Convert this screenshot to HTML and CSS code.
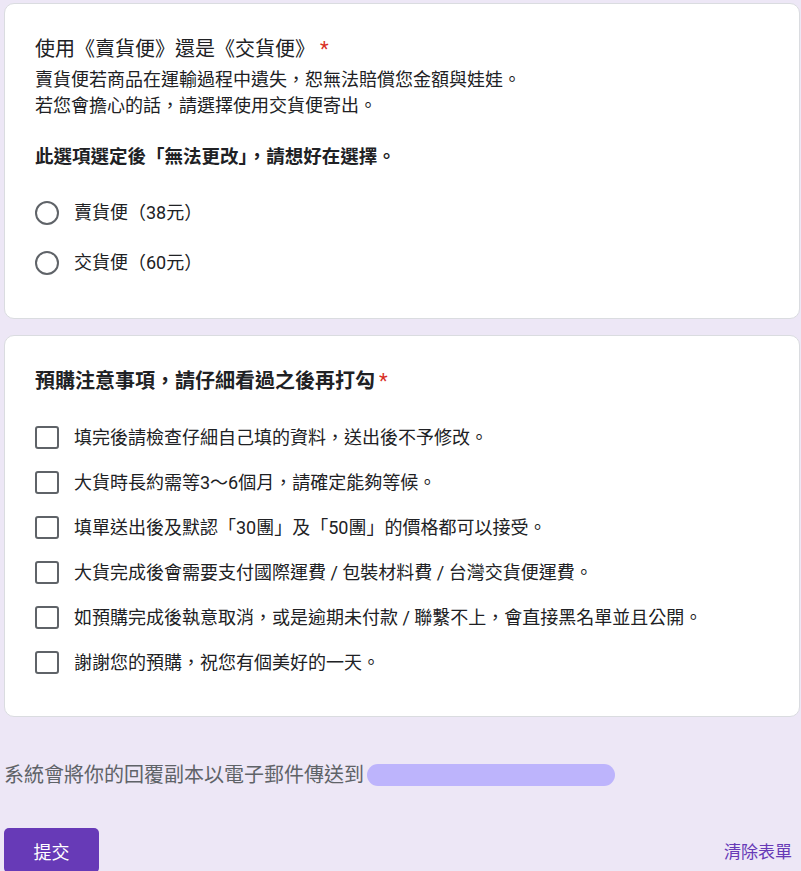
FILE: index.html
```html
<!DOCTYPE html>
<html lang="zh-Hant">
<head>
<meta charset="utf-8">
<title>預購表單</title>
<link rel="stylesheet" href="styles.css">
</head>
<body>
<main class="form">
  <section class="card card-radio">
    <div class="q-title">使用《賣貨便》還是《交貨便》<span class="req">*</span></div>
    <div class="q-desc">
      <div>賣貨便若商品在運輸過程中遺失，恕無法賠償您金額與娃娃。</div>
      <div>若您會擔心的話，請選擇使用交貨便寄出。</div>
      <div class="blank">&nbsp;</div>
      <div class="strong">此選項選定後「無法更改」，請想好在選擇。</div>
    </div>
    <div class="options radio-list">
      <label class="opt"><span class="radio"></span><span>賣貨便（38元）</span></label>
      <label class="opt"><span class="radio"></span><span>交貨便（60元）</span></label>
    </div>
  </section>

  <section class="card card-check">
    <div class="q-title strong">預購注意事項，請仔細看過之後再打勾<span class="req req-tight">*</span></div>
    <div class="options check-list">
      <label class="opt"><span class="box"></span><span>填完後請檢查仔細自己填的資料，送出後不予修改。</span></label>
      <label class="opt"><span class="box"></span><span>大貨時長約需等3～6個月，請確定能夠等候。</span></label>
      <label class="opt"><span class="box"></span><span>填單送出後及默認「30團」及「50團」的價格都可以接受。</span></label>
      <label class="opt"><span class="box"></span><span>大貨完成後會需要支付國際運費 / 包裝材料費 / 台灣交貨便運費。</span></label>
      <label class="opt"><span class="box"></span><span>如預購完成後執意取消，或是逾期未付款 / 聯繫不上，會直接黑名單並且公開。</span></label>
      <label class="opt"><span class="box"></span><span>謝謝您的預購，祝您有個美好的一天。</span></label>
    </div>
  </section>

  <div class="email-note">系統會將你的回覆副本以電子郵件傳送到<span class="masked"></span></div>

  <div class="actions">
    <button class="submit" type="button">提交</button>
    <button class="clear" type="button">清除表單</button>
  </div>
</main>
</body>
</html>
```

FILE: styles.css
```css
* { box-sizing: border-box; }

html, body {
  margin: 0;
  padding: 0;
  background: #ede7f6;
}

body {
  font-family: Roboto, "Noto Sans CJK TC", "Noto Sans", sans-serif;
  color: #202124;
  overflow: hidden;
}

.form {
  display: flex;
  flex-direction: column;
  padding: 3px 1px 0 4px;
}

.card {
  background: #fff;
  border: 1px solid #dadce0;
  border-radius: 10px;
  padding: 31px 30px 30px 30px;
}

.card-check {
  margin-top: 16px;
  padding-bottom: 31px;
}

.q-title {
  font-size: 20px;
  line-height: 28px;
  font-weight: 400;
}

.q-title.strong { font-weight: 700; }

.req {
  color: #d93025;
  margin-left: 5px;
}

.req-tight { margin-left: 4px; font-weight: 400; }

.q-desc {
  margin-top: 4px;
  font-size: 18px;
  line-height: 26px;
}

.q-desc .strong {
  font-weight: 700;
  font-size: 18.5px;
  margin-top: -1px;
}

.options {
  display: flex;
  flex-direction: column;
}

.radio-list { margin-top: 18px; }

.check-list { margin-top: 20px; }

.opt {
  display: flex;
  align-items: center;
  gap: 15px;
  font-size: 18px;
  line-height: 26px;
}

.radio-list .opt { height: 50px; }

.check-list .opt { height: 45px; }

.radio {
  width: 24px;
  height: 24px;
  border: 2px solid #5f6368;
  border-radius: 50%;
  flex: none;
}

.box {
  width: 24px;
  height: 23px;
  border: 2px solid #5f6368;
  border-radius: 3px;
  flex: none;
}

.email-note {
  margin-top: 44px;
  display: flex;
  align-items: center;
  font-size: 20px;
  line-height: 28px;
  color: #5f6368;
}

.masked {
  display: inline-block;
  width: 248px;
  height: 22px;
  margin-left: 3px;
  border-radius: 11px;
  background: #bdb4fc;
}

.actions {
  margin-top: 39px;
  display: flex;
  justify-content: space-between;
  align-items: center;
}

.submit {
  width: 95px;
  height: 45px;
  border: none;
  border-radius: 5px;
  background: #673ab7;
  color: #fff;
  font-family: inherit;
  font-size: 18px;
  padding: 0;
}

.clear {
  border: none;
  background: none;
  color: #673ab7;
  font-family: inherit;
  font-size: 17px;
  padding: 0;
  margin-right: 8px;
}
```
